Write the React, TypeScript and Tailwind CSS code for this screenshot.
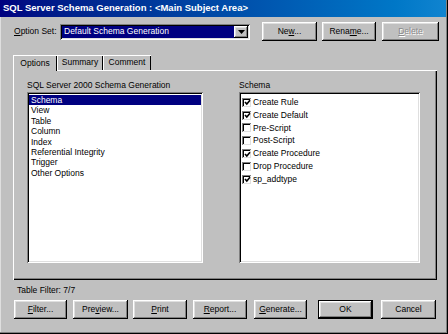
import React from "react";

const raised =
  "bg-[#c0c0c0] shadow-[inset_-1px_-1px_#000,inset_1px_1px_#fff,inset_-2px_-2px_#808080,inset_2px_2px_#dfdfdf]";
const sunken =
  "bg-white shadow-[inset_1px_1px_#808080,inset_-1px_-1px_#fff,inset_2px_2px_#000,inset_-2px_-2px_#dfdfdf]";

const tables = ["Schema", "View", "Table", "Column", "Index", "Referential Integrity", "Trigger", "Other Options"];

const schemaItems = [
  { label: "Create Rule", checked: true },
  { label: "Create Default", checked: true },
  { label: "Pre-Script", checked: false },
  { label: "Post-Script", checked: false },
  { label: "Create Procedure", checked: true },
  { label: "Drop Procedure", checked: false },
  { label: "sp_addtype", checked: true },
];

function Btn({
  pre = "",
  key1,
  post = "",
  w,
  disabled,
  isDefault,
  className = "",
}: {
  pre?: string;
  key1?: string;
  post?: string;
  w: string;
  disabled?: boolean;
  isDefault?: boolean;
  className?: string;
}) {
  return (
    <div
      className={`${w} h-[19px] flex items-center justify-center ${
        isDefault ? "border border-black" : ""
      } ${className}`}
    >
      <div
        className={`w-full h-full flex items-center justify-center ${raised} ${
          disabled ? "text-[#8a8a8a] [text-shadow:1px_1px_#fff]" : ""
        }`}
      >
        <span>
          {pre}
          {key1 && <span className="underline underline-offset-[1px]">{key1}</span>}
          {post}
        </span>
      </div>
    </div>
  );
}

function Check({ checked }: { checked: boolean }) {
  return (
    <div className="w-[9px] h-[9px] bg-white shadow-[inset_1px_1px_#808080,inset_-1px_-1px_#dfdfdf,inset_2px_2px_#000] flex items-center justify-center shrink-0">
      {checked && (
        <svg width="7" height="7" viewBox="0 0 7 7" className="ml-[1px] mt-[1px]">
          <path d="M1 3 L2.8 5 L6 1.2" stroke="#000" strokeWidth="1.6" fill="none" />
        </svg>
      )}
    </div>
  );
}

export default function App() {
  return (
    <div className="w-[448px] h-[334px] bg-[#c0c0c0] flex flex-col font-['Liberation_Sans',Arial,sans-serif] text-[8.5px] text-black overflow-hidden shadow-[inset_-1px_-1px_#000,inset_-2px_-2px_#808080,inset_1px_1px_#dfdfdf]">
      {/* title bar */}
      <div className="h-[17px] mr-[2px] bg-gradient-to-r from-[#000080] to-[#1084d0] flex items-center pl-[3px] text-white font-bold text-[9.5px]">
        SQL Server Schema Generation : &lt;Main Subject Area&gt;
      </div>

      {/* option set row */}
      <div className="flex items-center mt-[5px] pl-[14px] h-[19px]">
        <span className="w-[46px]">
          <span className="underline underline-offset-[1px]">O</span>ption Set:
        </span>
        <div className={`w-[190px] h-[16px] p-[2px] flex ${sunken}`}>
          <div className="flex-1 bg-[#000080] text-white pl-[2px] flex items-center">Default Schema Generation</div>
          <div className={`w-[14px] h-full flex items-center justify-center ${raised}`}>
            <svg width="7" height="4" viewBox="0 0 7 4">
              <path d="M0 0 H7 L3.5 4 Z" fill="#000" />
            </svg>
          </div>
        </div>
        <div className="flex ml-[12px] gap-[5px]">
          <Btn pre="Ne" key1="w" post="..." w="w-[55px]" />
          <Btn pre="Rena" key1="m" post="e..." w="w-[54px]" />
          <Btn key1="D" post="elete" w="w-[57px]" disabled className="ml-[1px]" />
        </div>
      </div>

      {/* tabs */}
      <div className="flex mt-[14px] ml-[13px] h-[15px] relative z-10">
        <div className="w-[44px] h-[16px] flex items-center justify-center bg-[#c0c0c0] shadow-[inset_1px_1px_#fff,inset_-1px_0_#000]">
          Options
        </div>
        <div className="w-[46px] h-full flex items-center justify-center shadow-[inset_1px_1px_#fff,inset_-1px_0_#000]">
          Summary
        </div>
        <div className="w-[48px] h-full flex items-center justify-center shadow-[inset_1px_1px_#fff,inset_-1px_0_#000]">
          Comment
        </div>
      </div>

      {/* tab panel */}
      <div className="ml-[13px] w-[424px] h-[210px] flex pt-[9px] pl-[14px] shadow-[inset_1px_1px_#fff,inset_-1px_-1px_#000,inset_-2px_-2px_#808080]">
        <div className="flex flex-col w-[176px]">
          <div className="h-[13px]">SQL Server 2000 Schema Generation</div>
          <div className={`h-[171px] p-[2px] ${sunken}`}>
            <div className="flex flex-col pt-[1px]">
              {tables.map((t, i) => (
                <div
                  key={t}
                  className={`h-[10.4px] leading-[10.4px] pl-[2px] ${i === 0 ? "bg-[#000080] text-white" : ""}`}
                >
                  {t}
                </div>
              ))}
            </div>
          </div>
        </div>
        <div className="flex flex-col w-[181px] ml-[36px]">
          <div className="h-[13px]">Schema</div>
          <div className={`h-[171px] p-[2px] ${sunken}`}>
            <div className="flex flex-col pt-[2px] pl-[1px]">
              {schemaItems.map((s) => (
                <div key={s.label} className="h-[12.8px] flex items-center gap-[2px]">
                  <Check checked={s.checked} />
                  <span>{s.label}</span>
                </div>
              ))}
            </div>
          </div>
        </div>
      </div>

      {/* footer */}
      <div className="ml-[17px] mt-[5px] h-[10px] leading-[10px]">Table Filter: 7/7</div>
      <div className="flex mt-[5px] ml-[14px] h-[19px]">
        <Btn key1="F" post="ilter..." w="w-[53px]" />
        <Btn pre="Pre" key1="v" post="iew..." w="w-[55px]" className="ml-[6px]" />
        <Btn key1="P" post="rint" w="w-[54px]" className="ml-[5px]" />
        <Btn key1="R" post="eport..." w="w-[54px]" className="ml-[6px]" />
        <Btn key1="G" post="enerate..." w="w-[53px]" className="ml-[7px]" />
        <Btn post="OK" w="w-[55px]" isDefault className="ml-[11px]" />
        <Btn post="Cancel" w="w-[55px]" className="ml-[8px]" />
      </div>
    </div>
  );
}
